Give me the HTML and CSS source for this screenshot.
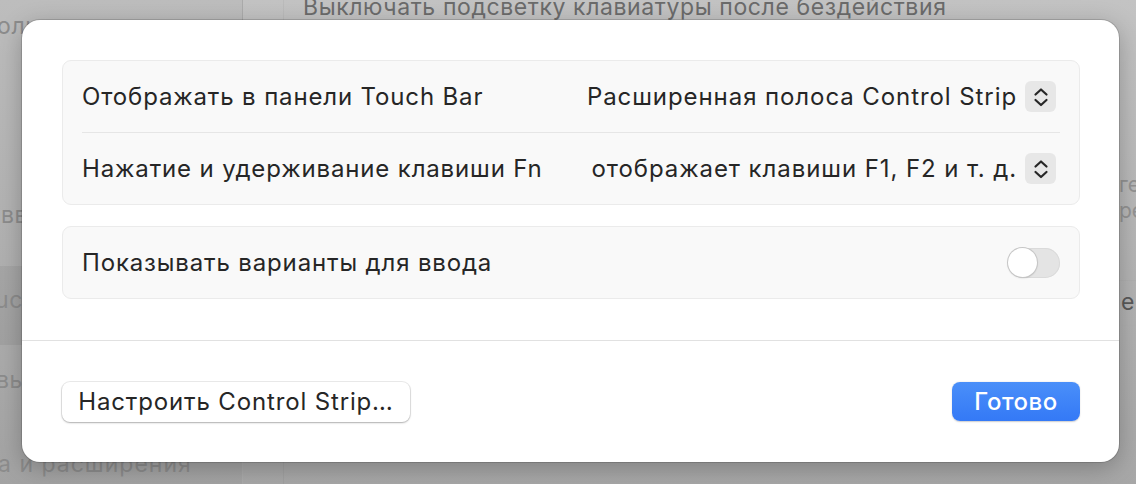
FILE: index.html
```html
<!DOCTYPE html>
<html lang="ru">
<head>
<meta charset="utf-8">
<title>Touch Bar</title>
<link rel="stylesheet" href="styles.css">
</head>
<body>
<div class="window">
  <aside class="sidebar">
    <div class="side-item side-top">оль</div>
    <div class="side-item side-a">вв</div>
    <div class="side-item side-sel">uch</div>
    <div class="side-item side-b">вы</div>
    <div class="side-item side-c">а и расширения</div>
  </aside>
  <main class="content">
    <div class="inset"></div>
    <div class="bg-title">Выключать подсветку клавиатуры после бездействия</div>
    <div class="bg-note">ге<br>ре</div>
    <div class="bg-row">е</div>
  </main>
</div>

<div class="sheet">
  <div class="sheet-body">
    <section class="group">
      <div class="row">
        <span class="label">Отображать в панели Touch Bar</span>
        <span class="popup">
          <span class="popup-value">Расширенная полоса Control Strip</span>
          <span class="stepper"><svg viewBox="0 0 30 30" width="30" height="30"><path d="M9.5 12.5 L15 7.5 L20.5 12.5 M9.5 18 L15 23 L20.5 18" fill="none" stroke="#262626" stroke-width="2.2" stroke-linecap="round" stroke-linejoin="round"/></svg></span>
        </span>
      </div>
      <div class="divider"></div>
      <div class="row">
        <span class="label">Нажатие и удерживание клавиши Fn</span>
        <span class="popup">
          <span class="popup-value">отображает клавиши F1, F2 и т. д.</span>
          <span class="stepper"><svg viewBox="0 0 30 30" width="30" height="30"><path d="M9.5 12.5 L15 7.5 L20.5 12.5 M9.5 18 L15 23 L20.5 18" fill="none" stroke="#262626" stroke-width="2.2" stroke-linecap="round" stroke-linejoin="round"/></svg></span>
        </span>
      </div>
    </section>
    <section class="group">
      <div class="row">
        <span class="label">Показывать варианты для ввода</span>
        <span class="toggle"><span class="knob"></span></span>
      </div>
    </section>
  </div>
  <footer class="sheet-footer">
    <button class="btn btn-plain">Настроить Control Strip…</button>
    <button class="btn btn-primary">Готово</button>
  </footer>
</div>
</body>
</html>
```
FILE: styles.css
```css
* { box-sizing: border-box; }
html, body {
  margin: 0;
  padding: 0;
  width: 1136px;
  height: 484px;
  overflow: hidden;
}
body {
  font-family: "Inter", "Noto Sans", sans-serif;
  position: relative;
}
.window {
  display: flex;
  width: 1136px;
  height: 484px;
  background: linear-gradient(180deg, #c3c3c3 0%, #b6b6b6 50%, #a7a7a7 100%);
}
.sidebar {
  width: 243px;
  flex-shrink: 0;
  border-right: 1px solid #ababab;
  background: linear-gradient(180deg, #bdbdbd 0%, #b1b1b1 50%, #a3a3a3 100%);
  color: #8c8c8c;
  font-size: 23px;
  letter-spacing: 0.6px;
  overflow: hidden;
}
.side-item {
  white-space: nowrap;
  height: 40px;
  display: flex;
  align-items: center;
}
.side-top { margin-top: 6px; margin-left: -3px; }
.side-a { margin-top: 149px; margin-left: 1px; }
.side-sel {
  margin-top: 31px;
  height: 79px;
  background: rgba(0,0,0,0.055);
  margin-left: -5px;
  padding-bottom: 12px;
}
.side-b { margin-top: 15px; margin-left: -4px; }
.side-c { margin-top: 44px; margin-left: -2px; letter-spacing: 1px; }
.content {
  flex: 1;
  position: relative;
  overflow: hidden;
}
.inset {
  position: absolute;
  left: 40px;
  top: 0;
  bottom: 0;
  width: 840px;
  border-left: 1px solid rgba(0,0,0,0.04);
}
.bg-title {
  height: 26px;
  margin-top: -6px;
  padding-left: 60px;
  font-size: 23px;
  letter-spacing: 0.6px;
  line-height: 26px;
  color: #6b6b6b;
  white-space: nowrap;
  overflow: hidden;
}
.bg-note {
  margin-top: 152px;
  margin-left: 876px;
  font-size: 21px;
  line-height: 26px;
  color: #939393;
  white-space: nowrap;
}
.bg-row {
  margin-top: 56px;
  margin-left: 876px;
  height: 46px;
  border-top: 1px solid #b0b0b0;
  border-bottom: 1px solid #b0b0b0;
  font-size: 23px;
  line-height: 42px;
  color: #5a5a5a;
  white-space: nowrap;
  padding-left: 2px;
}

.sheet {
  position: absolute;
  left: 22px;
  top: 20px;
  width: 1097px;
  height: 442px;
  background: #ffffff;
  border-radius: 18px;
  box-shadow: 0 0 0 1px rgba(0,0,0,0.14), 0 6px 24px rgba(0,0,0,0.25);
  display: flex;
  flex-direction: column;
}
.sheet-body {
  padding: 40px 39px 0 40px;
  display: flex;
  flex-direction: column;
  gap: 21px;
  height: 321px;
  border-bottom: 1px solid #e1e1e1;
}
.group {
  background: #f9f9f9;
  border: 1px solid #ebebeb;
  border-radius: 9px;
  padding: 0 19px;
}
.row {
  height: 71px;
  display: flex;
  align-items: center;
  justify-content: space-between;
  font-size: 24px;
  letter-spacing: 0.85px;
  color: #262626;
}
.divider {
  height: 1px;
  background: #e6e6e6;
}
.label { white-space: nowrap; }
.popup {
  display: flex;
  align-items: center;
  gap: 8px;
  white-space: nowrap;
  letter-spacing: 0.92px;
}
.stepper {
  width: 31px;
  height: 31px;
  border-radius: 6px;
  background: #e7e7e7;
  display: flex;
  align-items: center;
  justify-content: center;
  margin-right: 4px;
}
.toggle {
  width: 52px;
  height: 30px;
  border-radius: 15px;
  background: #e4e4e4;
  box-shadow: inset 0 0 0 1px #dadada;
  display: flex;
  align-items: center;
}
.knob {
  width: 29px;
  height: 29px;
  border-radius: 50%;
  background: #ffffff;
  box-shadow: 0 0 0 1px #c6c6c6, 0 1px 2px rgba(0,0,0,0.2);
}
.sheet-footer {
  flex: 1;
  display: flex;
  align-items: center;
  justify-content: space-between;
  padding: 0 39px 0 40px;
}
.btn {
  font-family: "Inter", "Noto Sans", sans-serif;
  font-size: 24px;
  letter-spacing: 0.85px;
  border: 0;
  height: 40px;
  border-radius: 8px;
  padding: 0;
  cursor: default;
}
.btn-plain {
  background: #ffffff;
  color: #262626;
  box-shadow: 0 0 0 1px rgba(0,0,0,0.08), 0 1px 2px rgba(0,0,0,0.25);
  width: 348px;
}
.btn-primary {
  width: 128px;
  height: 39px;
  color: #ffffff;
  font-weight: 500;
  letter-spacing: 0.5px;
  background: linear-gradient(180deg, #4a8ff9 0%, #3479f6 100%);
  box-shadow: 0 0.5px 1.5px rgba(0,0,0,0.2);
}
```
